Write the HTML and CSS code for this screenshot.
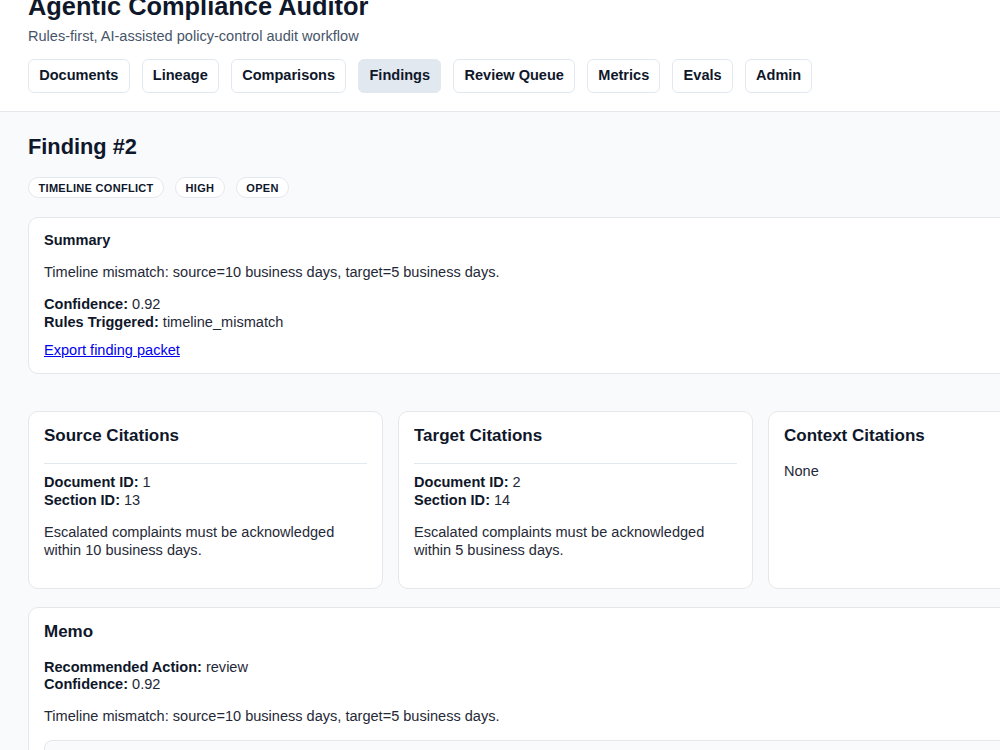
FILE: index.html
```html
<!DOCTYPE html>
<html lang="en">
<head>
<meta charset="utf-8">
<title>Agentic Compliance Auditor</title>
<link rel="stylesheet" href="styles.css">
</head>
<body>
<div class="page">
  <header class="app-header">
    <h1 class="app-title">Agentic Compliance Auditor</h1>
    <p class="app-subtitle">Rules-first, AI-assisted policy-control audit workflow</p>
    <nav class="tabs">
      <a class="tab" href="#">Documents</a>
      <a class="tab" href="#">Lineage</a>
      <a class="tab" href="#">Comparisons</a>
      <a class="tab tab-active" href="#">Findings</a>
      <a class="tab" href="#">Review Queue</a>
      <a class="tab" href="#">Metrics</a>
      <a class="tab" href="#">Evals</a>
      <a class="tab" href="#">Admin</a>
    </nav>
  </header>

  <main class="content">
    <h2 class="finding-title">Finding #2</h2>
    <div class="tags">
      <span class="tag">Timeline conflict</span>
      <span class="tag">High</span>
      <span class="tag">Open</span>
    </div>

    <section class="card summary-card">
      <h4 class="card-label">Summary</h4>
      <p class="text">Timeline mismatch: source=10 business days, target=5 business days.</p>
      <p class="text kv"><strong>Confidence:</strong> 0.92<br><strong>Rules Triggered:</strong> timeline_mismatch</p>
      <p class="text export"><a href="#" class="link">Export finding packet</a></p>
    </section>

    <div class="citations">
      <section class="card">
        <h3 class="card-title">Source Citations</h3>
        <div class="citation">
          <hr class="divider">
          <p class="text kv"><strong>Document ID:</strong> 1<br><strong>Section ID:</strong> 13</p>
          <p class="text">Escalated complaints must be acknowledged within 10 business days.</p>
        </div>
      </section>
      <section class="card">
        <h3 class="card-title">Target Citations</h3>
        <div class="citation">
          <hr class="divider">
          <p class="text kv"><strong>Document ID:</strong> 2<br><strong>Section ID:</strong> 14</p>
          <p class="text">Escalated complaints must be acknowledged within 5 business days.</p>
        </div>
      </section>
      <section class="card">
        <h3 class="card-title">Context Citations</h3>
        <p class="text">None</p>
      </section>
    </div>

    <section class="card memo-card">
      <h3 class="card-title">Memo</h3>
      <p class="text kv"><strong>Recommended Action:</strong> review<br><strong>Confidence:</strong> 0.92</p>
      <p class="text">Timeline mismatch: source=10 business days, target=5 business days.</p>
      <pre class="memo-body">Finding: Timeline mismatch between source and target policy.
Source requires acknowledgement within 10 business days.
Target requires acknowledgement within 5 business days.</pre>
    </section>
  </main>
</div>
</body>
</html>
```

FILE: styles.css
```css
html, body {
  margin: 0;
  padding: 0;
}

body {
  background: #f8fafc;
  color: #1f2937;
  font-family: "Liberation Sans", Arial, sans-serif;
  font-size: 14.56px;
  line-height: 1.2;
}

.page {
  min-width: 1151px;
}

.app-header {
  background: #ffffff;
  border-bottom: 1px solid #e5e7eb;
  padding: 0 28px 18px;
}

.app-title {
  margin: -8px 0 7px;
  font-size: 25.4px;
  line-height: normal;
  font-weight: 700;
  color: #0f172a;
}

.app-subtitle {
  margin: 0 0 14px;
  color: #475569;
  font-size: 14.56px;
}

.tabs {
  display: flex;
  gap: 12px;
}

.tab {
  display: inline-block;
  padding: 7px 10.2px;
  border: 1px solid #e2e8f0;
  border-radius: 6px;
  background: #ffffff;
  color: #0f172a;
  font-weight: 700;
  text-decoration: none;
  line-height: 17.4px;
}

.tab-active {
  background: #e2e8f0;
}

.content {
  padding: 22px 28px 20px;
  width: 1095px;
}

.finding-title {
  margin: 0 0 17.5px;
  font-size: 21.8px;
  line-height: normal;
  color: #0f172a;
}

.tags {
  display: flex;
  gap: 11px;
  margin-bottom: 19px;
}

.tag {
  display: inline-block;
  padding: 3.5px 9.5px;
  border: 1px solid #e2e8f0;
  border-radius: 999px;
  background: #ffffff;
  color: #0f172a;
  font-size: 11px;
  font-weight: 700;
  letter-spacing: 0.3px;
  text-transform: uppercase;
  line-height: normal;
}

.card {
  background: #ffffff;
  border: 1px solid #e5e7eb;
  border-radius: 10px;
  padding: 14px 15px;
}

.summary-card {
  margin-bottom: 37px;
}

.card-label {
  margin: 0 0 14.5px;
  font-size: 14.56px;
  color: #0f172a;
}

.card-title {
  margin: 0 0 17px;
  font-size: 17px;
  line-height: normal;
  color: #0f172a;
}

.text {
  margin: 0 0 14.5px;
  line-height: 17.6px;
}

.text strong {
  color: #0f172a;
}

.export {
  margin: -4.5px 0 0;
}

.link {
  color: #0000ee;
  text-decoration: underline;
}

.citations {
  display: grid;
  grid-template-columns: repeat(3, 1fr);
  gap: 15px;
  margin-bottom: 18px;
}

.divider {
  border: 0;
  border-top: 1px solid #e2e8f0;
  margin: 0 0 10px;
}

.memo-body {
  margin: 0;
  padding: 14px;
  background: #f8fafc;
  border: 1px solid #e5e7eb;
  border-radius: 8px;
  font-family: "Liberation Mono", monospace;
  font-size: 13px;
  white-space: pre-wrap;
}
```
